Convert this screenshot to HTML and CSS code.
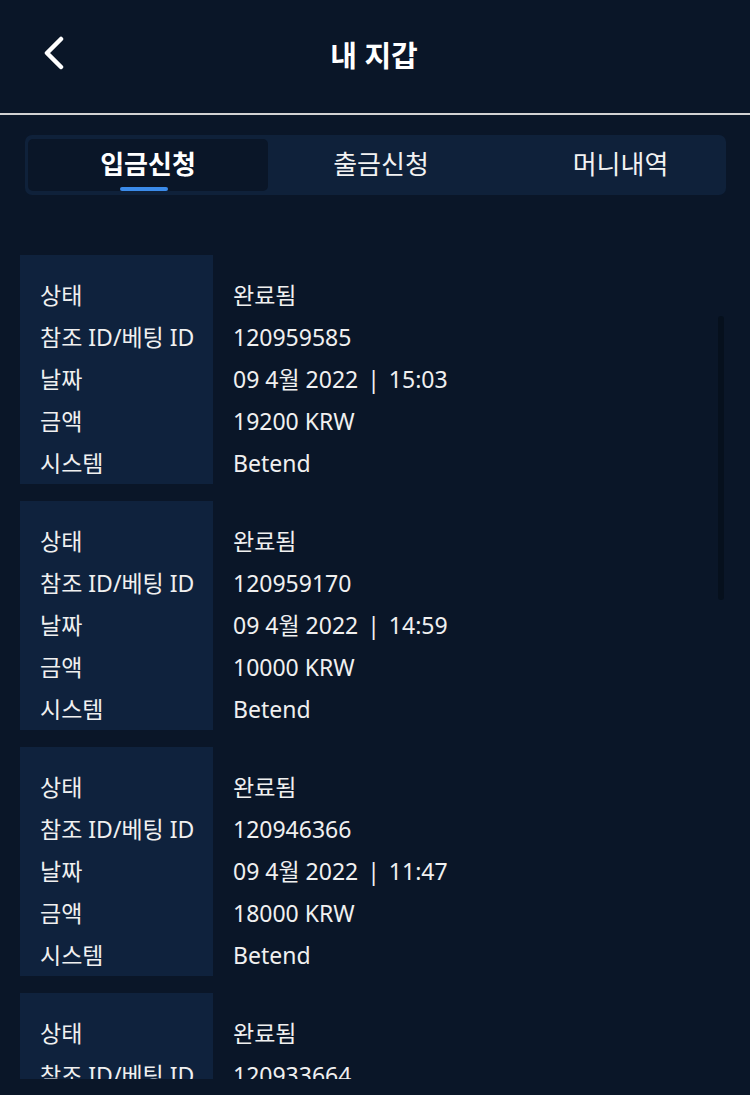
FILE: index.html
```html
<!DOCTYPE html>
<html lang="ko">

<head>
  <meta charset="UTF-8" />
  <meta name="viewport" content="width=device-width, initial-scale=1.0" />
  <title>내 지갑</title>
  <link rel="stylesheet" href="styles.css">
</head>

<body>

  <div class="header">
    <button class="back" aria-label="뒤로">
      <svg width="26" height="34" viewBox="0 0 26 34">
        <path d="M20 3 L6 17 L20 31" fill="none" stroke="#fff" stroke-width="4.5" stroke-linecap="round" stroke-linejoin="round" />
      </svg>
    </button>
    <div class="title">내 지갑</div>
  </div>

  <div class="tabs">
    <button class="tab active">입금신청</button>
    <button class="tab">출금신청</button>
    <button class="tab last">머니내역</button>
  </div>

  <div class="list">
    <div class="card">
      <div class="labels">
        <div>상태</div>
        <div>참조 ID/베팅 ID</div>
        <div>날짜</div>
        <div>금액</div>
        <div>시스템</div>
      </div>
      <div class="values">
        <div>완료됨</div>
        <div>120959585</div>
        <div>09 4월 2022 <span class="sep">|</span> 15:03</div>
        <div>19200 KRW</div>
        <div>Betend</div>
      </div>
    </div>

    <div class="card">
      <div class="labels">
        <div>상태</div>
        <div>참조 ID/베팅 ID</div>
        <div>날짜</div>
        <div>금액</div>
        <div>시스템</div>
      </div>
      <div class="values">
        <div>완료됨</div>
        <div>120959170</div>
        <div>09 4월 2022 <span class="sep">|</span> 14:59</div>
        <div>10000 KRW</div>
        <div>Betend</div>
      </div>
    </div>

    <div class="card">
      <div class="labels">
        <div>상태</div>
        <div>참조 ID/베팅 ID</div>
        <div>날짜</div>
        <div>금액</div>
        <div>시스템</div>
      </div>
      <div class="values">
        <div>완료됨</div>
        <div>120946366</div>
        <div>09 4월 2022 <span class="sep">|</span> 11:47</div>
        <div>18000 KRW</div>
        <div>Betend</div>
      </div>
    </div>

    <div class="card">
      <div class="labels">
        <div>상태</div>
        <div>참조 ID/베팅 ID</div>
        <div>날짜</div>
        <div>금액</div>
        <div>시스템</div>
      </div>
      <div class="values">
        <div>완료됨</div>
        <div>120933664</div>
        <div>09 4월 2022 <span class="sep">|</span> 11:20</div>
        <div>30000 KRW</div>
        <div>Betend</div>
      </div>
    </div>

    <div class="scroll-thumb"></div>
  </div>

</body>

</html>
```

FILE: styles.css
```css
body {
  margin: 0;
  font-family: 'Noto Sans', 'Noto Sans CJK KR', sans-serif;
  background-color: #0a1628;
  color: white;
  height: 1095px;
  overflow: hidden;
}

.header {
  position: relative;
  height: 113px;
  border-bottom: 2px solid #d2d2d2;
  display: flex;
  align-items: center;
  justify-content: center;
}

.back {
  position: absolute;
  left: 41px;
  top: 36px;
  padding: 0;
  background: transparent;
  border: none;
  display: flex;
}

.title {
  font-size: 29px;
  font-weight: bold;
  margin: -6px 2px 0 0;
}

.tabs {
  margin: 20px 24px 0 25px;
  height: 60px;
  box-sizing: border-box;
  padding: 4px 3px;
  background: #0f213a;
  border-radius: 7px;
  display: grid;
  grid-template-columns: 240px 226px 1fr;
}

.tab {
  position: relative;
  background: transparent;
  border: none;
  color: #f2f2f2;
  font-family: inherit;
  font-size: 26px;
  padding: 0 0 4px;
  border-radius: 5px;
}

.tab.last {
  padding-left: 24px;
}

.tab.active {
  background: #0a1628;
  font-weight: bold;
  color: white;
}

.tab.active::after {
  content: '';
  position: absolute;
  left: 92px;
  bottom: 0;
  width: 48px;
  height: 4px;
  border-radius: 2px;
  background: #3b8bea;
}

.list {
  position: relative;
  margin: 60px 20px 0;
  height: 824px;
  overflow: hidden;
}

.card {
  display: flex;
  margin-bottom: 17px;
  font-size: 23px;
  line-height: 42px;
}

.labels {
  width: 193px;
  box-sizing: border-box;
  padding: 19px 0 0 20px;
  background: #0f223d;
  color: #f0f0f0;
}

.values {
  padding: 19px 0 0 20px;
  color: #f0f0f0;
}

.sep {
  margin: 0 3px;
}

.scroll-thumb {
  position: absolute;
  top: 61px;
  right: 6px;
  width: 6px;
  height: 284px;
  border-radius: 3px;
  background: #06101d;
}
```
